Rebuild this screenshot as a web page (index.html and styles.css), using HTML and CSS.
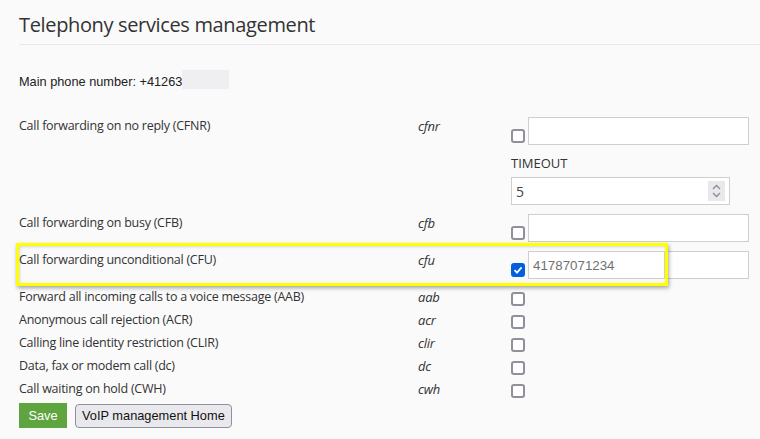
FILE: index.html
```
<!DOCTYPE html>
<html lang="en">
<head>
<meta charset="utf-8">
<title>Telephony services management</title>
<link rel="stylesheet" href="styles.css">
</head>
<body>
<div class="page">
  <h1 class="title">Telephony services management</h1>
  <p class="main">Main phone number: +41263<span class="blur"></span></p>

  <div class="rows">
    <div class="row row-input">
      <div class="label">Call forwarding on no reply (CFNR)</div>
      <div class="code">cfnr</div>
      <div class="ctrl">
        <div class="line">
          <span class="cb" role="checkbox" aria-checked="false"></span>
          <input class="field" type="text" value="">
        </div>
        <div class="sub-label">TIMEOUT</div>
        <div class="number">
          <input class="number-input" type="text" value="5">
          <span class="spin">
            <svg width="11" height="16" viewBox="0 0 11 16"><path d="M2 6 L5.5 2.5 L9 6" fill="none" stroke="#8a8a92" stroke-width="1.3"/><path d="M2 10 L5.5 13.5 L9 10" fill="none" stroke="#8a8a92" stroke-width="1.3"/></svg>
          </span>
        </div>
      </div>
    </div>

    <div class="row row-input">
      <div class="label">Call forwarding on busy (CFB)</div>
      <div class="code">cfb</div>
      <div class="ctrl">
        <div class="line">
          <span class="cb" role="checkbox" aria-checked="false"></span>
          <input class="field" type="text" value="">
        </div>
      </div>
    </div>

    <div class="row row-input row-hl">
      <div class="label">Call forwarding unconditional (CFU)</div>
      <div class="code">cfu</div>
      <div class="ctrl">
        <div class="line">
          <span class="cb checked" role="checkbox" aria-checked="true">
            <svg width="10" height="10" viewBox="0 0 10 10"><path d="M1.5 5.2 L4 7.6 L8.6 2.4" fill="none" stroke="#fff" stroke-width="1.8"/></svg>
          </span>
          <input class="field muted" type="text" value="41787071234">
        </div>
      </div>
      <div class="highlight"><span class="hl-edge"></span></div>
    </div>

    <div class="row row-cb">
      <div class="label">Forward all incoming calls to a voice message (AAB)</div>
      <div class="code">aab</div>
      <div class="ctrl"><span class="cb" role="checkbox" aria-checked="false"></span></div>
    </div>
    <div class="row row-cb">
      <div class="label">Anonymous call rejection (ACR)</div>
      <div class="code">acr</div>
      <div class="ctrl"><span class="cb" role="checkbox" aria-checked="false"></span></div>
    </div>
    <div class="row row-cb">
      <div class="label">Calling line identity restriction (CLIR)</div>
      <div class="code">clir</div>
      <div class="ctrl"><span class="cb" role="checkbox" aria-checked="false"></span></div>
    </div>
    <div class="row row-cb">
      <div class="label">Data, fax or modem call (dc)</div>
      <div class="code">dc</div>
      <div class="ctrl"><span class="cb" role="checkbox" aria-checked="false"></span></div>
    </div>
    <div class="row row-cb">
      <div class="label">Call waiting on hold (CWH)</div>
      <div class="code">cwh</div>
      <div class="ctrl"><span class="cb" role="checkbox" aria-checked="false"></span></div>
    </div>
  </div>

  <div class="actions">
    <button class="btn-save" type="button">Save</button>
    <button class="btn-home" type="button">VoIP management Home</button>
  </div>
</div>
</body>
</html>
```
FILE: styles.css
```
* { box-sizing: border-box; }

html, body {
  margin: 0;
  padding: 0;
  background: #fafafa;
}

body {
  font-family: "Open Sans", "Liberation Sans", Arial, sans-serif;
  color: #333;
  width: 760px;
  height: 439px;
  overflow: hidden;
}

.page {
  padding-left: 19px;
}

.title {
  margin: 0;
  padding: 11px 0 5px 0;
  font-size: 20px;
  letter-spacing: -0.35px;
  font-weight: 400;
  line-height: 28px;
  color: #333;
  border-bottom: 1px solid #e8e8e8;
}

.main {
  margin: 25px 0 0 0;
  font-family: "Liberation Sans", Arial, sans-serif;
  font-size: 12.75px;
  line-height: 23px;
  color: #222;
}

.blur {
  display: inline-block;
  width: 47px;
  height: 19px;
  background: #efeff1;
  vertical-align: top;
}

.rows {
  margin-top: 24px;
}

.row {
  display: grid;
  grid-template-columns: 399px 93px 1fr;
  font-size: 12.5px;
  line-height: 18px;
  position: relative;
}

.label {
  letter-spacing: -0.25px;
}

.row-input { padding-bottom: 9px; }
.row-cb { height: 23px; }

.code {
  font-style: italic;
  font-size: 13px;
  letter-spacing: -0.2px;
}

.line {
  display: flex;
  align-items: flex-end;
}

.cb {
  display: inline-flex;
  align-items: center;
  justify-content: center;
  width: 14px;
  height: 14px;
  border: 2px solid #8f8f9d;
  border-radius: 3px;
  background: #fff;
  flex: none;
}

.line .cb {
  margin: 0 3px 2px 0;
}

.row-cb .ctrl { padding-top: 4px; }
.row-cb .cb { display: flex; }

.cb.checked {
  background: #0060df;
  border-color: #0060df;
}

.field {
  width: 221px;
  height: 28px;
  border: 1px solid #cfcfcf;
  background: #fff;
  margin: 0;
  padding: 0 4px;
  font-family: "Liberation Sans", Arial, sans-serif;
  font-size: 13.33px;
  color: #333;
  outline: none;
}

.field.muted { color: #707070; }

.sub-label {
  margin-top: 9px;
  font-size: 13px;
  text-transform: uppercase;
  line-height: 18px;
}

.number {
  margin-top: 5px;
  width: 219px;
  height: 28px;
  border: 1px solid #cfcfcf;
  background: #fff;
  display: flex;
  align-items: center;
  padding: 0 4px 0 4px;
}

.number-input {
  flex: 1;
  min-width: 0;
  border: 0;
  margin: 0;
  padding: 0;
  background: transparent;
  font-family: "Open Sans", sans-serif;
  font-size: 14px;
  color: #444;
  outline: none;
}

.spin {
  width: 17px;
  height: 20px;
  background: #e9e9ed;
  display: flex;
  align-items: center;
  justify-content: center;
}

.highlight {
  position: absolute;
  left: -3px;
  top: -8px;
  width: 652px;
  height: 43px;
  border: 3px solid #ffff00;
  box-shadow: 1px 2px 4px rgba(0, 0, 0, 0.35), inset 1px 1px 3px rgba(0, 0, 0, 0.15);
  pointer-events: none;
}

.hl-edge {
  position: absolute;
  right: 0;
  top: 6px;
  width: 1px;
  height: 27px;
  background: #cfcfcf;
}

.actions {
  display: flex;
  align-items: center;
  gap: 8px;
}

.btn-save {
  width: 48px;
  height: 25px;
  border: 0;
  margin: 0;
  background: #5fa53f;
  color: #fff;
  font-family: "Liberation Sans", Arial, sans-serif;
  font-size: 12.8px;
  padding: 0;
}

.btn-home {
  height: 24px;
  margin: 0;
  padding: 0 6px;
  border: 1px solid #8f8f9d;
  border-radius: 4px;
  background: #e9e9ed;
  color: #111;
  font-family: "Liberation Sans", Arial, sans-serif;
  font-size: 12.8px;
}
```
